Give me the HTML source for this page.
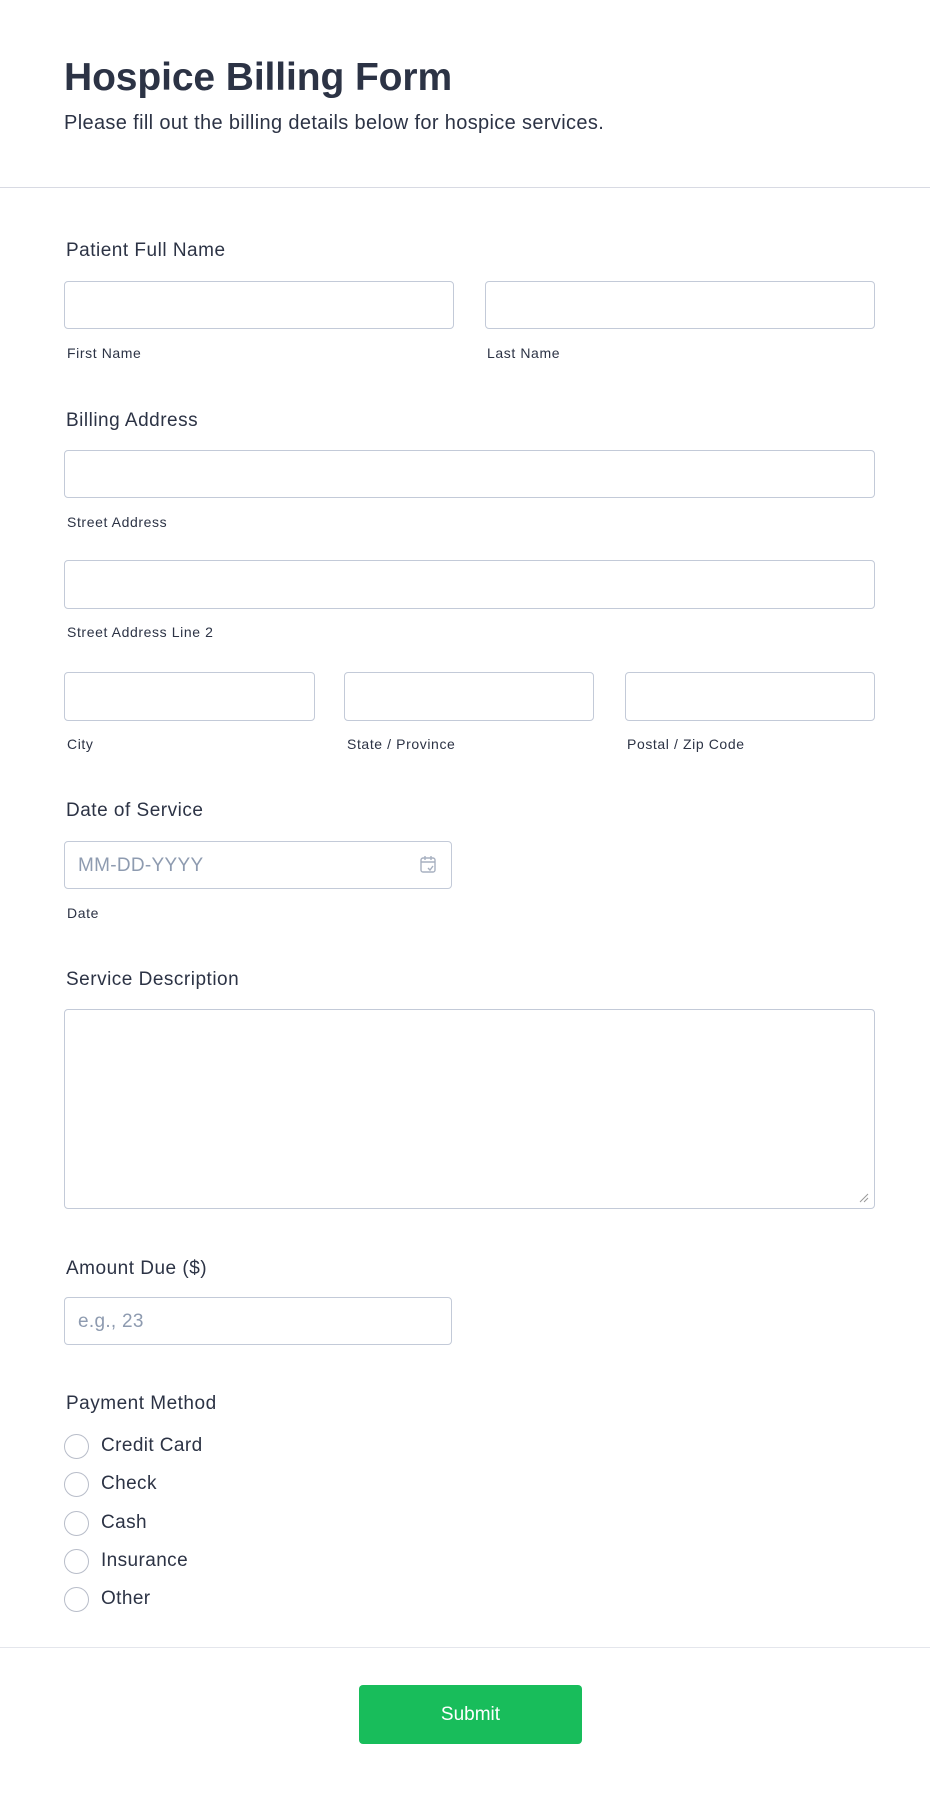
<!DOCTYPE html>
<html><head><style>
*{box-sizing:border-box;margin:0;padding:0}
body{width:930px;height:1793px;background:#fff;font-family:"Liberation Sans",sans-serif;color:#2c3345;position:relative;overflow:hidden}
.a{position:absolute}
h1{position:absolute;left:64px;top:56px;font-size:39px;font-weight:bold;letter-spacing:-0.1px}
.sub{left:64px;top:112px;font-size:20px;letter-spacing:0.35px}
.hr{left:0;width:930px;height:1px;background:#d8dae3}
.lbl{left:66px;font-size:19px;line-height:22px;letter-spacing:0.5px}
.sl{font-size:14px;line-height:16px;color:#2c3345;letter-spacing:0.6px}
.in{border:1px solid #c3cad8;border-radius:4px;background:#fff}
.ph{font-size:19px;color:#8e9bb0;line-height:48px;padding-left:13px;letter-spacing:0.3px}
.r{left:64px;width:25px;height:25px;border:1px solid #b8bdc9;border-radius:50%}
.rt{left:101px;font-size:19px;line-height:22px;letter-spacing:0.4px}
</style></head><body>
<h1>Hospice Billing Form</h1>
<div class="a sub">Please fill out the billing details below for hospice services.</div>
<div class="a hr" style="top:187px"></div>

<div class="a lbl" style="top:240px">Patient Full Name</div>
<div class="a in" style="left:64px;top:281px;width:390px;height:48px"></div>
<div class="a in" style="left:485px;top:281px;width:390px;height:48px"></div>
<div class="a sl" style="left:67px;top:345px">First Name</div>
<div class="a sl" style="left:487px;top:345px">Last Name</div>

<div class="a lbl" style="top:410px">Billing Address</div>
<div class="a in" style="left:64px;top:450px;width:811px;height:48px"></div>
<div class="a sl" style="left:67px;top:514px">Street Address</div>
<div class="a in" style="left:64px;top:560px;width:811px;height:49px"></div>
<div class="a sl" style="left:67px;top:624px">Street Address Line 2</div>
<div class="a in" style="left:64px;top:672px;width:251px;height:49px"></div>
<div class="a in" style="left:344px;top:672px;width:250px;height:49px"></div>
<div class="a in" style="left:625px;top:672px;width:250px;height:49px"></div>
<div class="a sl" style="left:67px;top:736px">City</div>
<div class="a sl" style="left:347px;top:736px">State / Province</div>
<div class="a sl" style="left:627px;top:736px">Postal / Zip Code</div>

<div class="a lbl" style="top:800px">Date of Service</div>
<div class="a in ph" style="left:64px;top:841px;width:388px;height:48px">MM-DD-YYYY</div>
<svg class="a" style="left:419px;top:855px" width="18" height="20" viewBox="0 0 18 20" fill="none" stroke="#a7b0c0" stroke-width="1.4"><rect x="2" y="3" width="14" height="14" rx="2"/><path d="M2 7h14M6 1v4M12 1v4M9 13l2 2 3-4"/></svg>
<div class="a sl" style="left:67px;top:905px">Date</div>

<div class="a lbl" style="top:969px">Service Description</div>
<div class="a in" style="left:64px;top:1009px;width:811px;height:200px"></div>
<svg class="a" style="left:859px;top:1193px" width="10" height="10" stroke="#999" stroke-width="1"><path d="M9 1L1 9M9 5L5 9"/></svg>

<div class="a lbl" style="top:1258px">Amount Due ($)</div>
<div class="a in ph" style="left:64px;top:1297px;width:388px;height:48px">e.g., 23</div>

<div class="a lbl" style="top:1393px">Payment Method</div>
<div class="a r" style="top:1434px"></div><div class="a rt" style="top:1435px">Credit Card</div>
<div class="a r" style="top:1472px"></div><div class="a rt" style="top:1473px">Check</div>
<div class="a r" style="top:1511px"></div><div class="a rt" style="top:1512px">Cash</div>
<div class="a r" style="top:1549px"></div><div class="a rt" style="top:1550px">Insurance</div>
<div class="a r" style="top:1587px"></div><div class="a rt" style="top:1588px">Other</div>

<div class="a hr" style="top:1647px;background:#e4e6ec"></div>
<div class="a" style="left:359px;top:1685px;width:223px;height:59px;background:#18bd5b;border-radius:4px;color:#fff;font-size:19px;text-align:center;line-height:59px">Submit</div>
</body></html>
